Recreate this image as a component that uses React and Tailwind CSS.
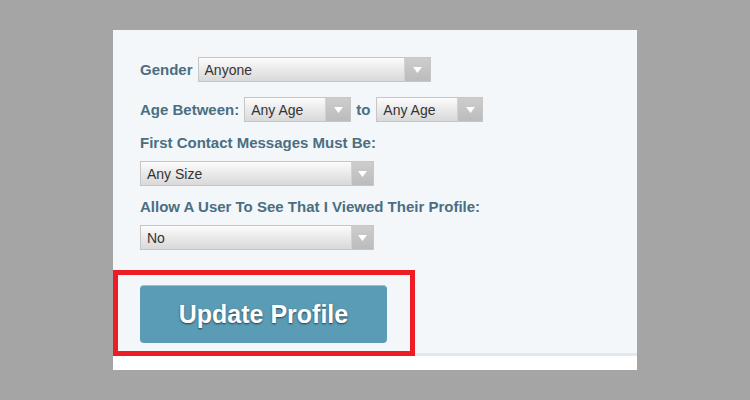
// Privacy settings form with the "Update Profile" call-out
const FONT = { fontFamily: '"Liberation Sans", Arial, Helvetica, sans-serif' }

function Caret() {
  return (
    <svg width="9" height="6" viewBox="0 0 9 6">
      <path d="M0 0h9L4.5 6z" fill="#ffffff" />
    </svg>
  )
}

function FakeSelect({ value, width, arrow = 22 }) {
  return (
    <div
      className="flex h-[25px] shrink-0 border border-[#c6c6c6] bg-linear-to-b from-[#fbfbfb] to-[#d9d9d9]"
      style={{ width }}
    >
      <div className="flex-1 flex items-center pl-[6px] text-[14px] text-[#333333] leading-none">{value}</div>
      <div
        className="h-full flex items-center justify-center border-l border-[#d2d2d2] bg-linear-to-b from-[#cdcdcd] to-[#bcbcbc]"
        style={{ width: arrow }}
      >
        <Caret />
      </div>
    </div>
  )
}

const LABEL = 'text-[15px] font-bold text-[#4b6e82] leading-[18px] whitespace-nowrap'

export default function App() {
  return (
    <div className="w-[750px] h-[400px] bg-[#a5a5a5] pt-[30px]" style={FONT}>
      <div className="relative mx-auto w-[524px] h-[340px] bg-white">
        <div className="h-[326px] bg-[#f3f7fa] border-b-[3px] border-[#e3e8ec] pl-[27px] pt-[27px]">
          <div className="flex items-center">
            <span className={LABEL}>Gender</span>
            <div className="ml-[5px]"><FakeSelect value="Anyone" width={233} arrow={26} /></div>
          </div>

          <div className="flex items-center mt-[15px]">
            <span className={LABEL}>Age Between:</span>
            <div className="ml-[5px]"><FakeSelect value="Any Age" width={107} arrow={25} /></div>
            <span className={`${LABEL} ml-[5px]`}>to</span>
            <div className="ml-[6px]"><FakeSelect value="Any Age" width={107} arrow={25} /></div>
          </div>

          <p className={`${LABEL} mt-[12px]`}>First Contact Messages Must Be:</p>
          <div className="mt-[9px]"><FakeSelect value="Any Size" width={234} /></div>

          <p className={`${LABEL} mt-[12px]`}>Allow A User To See That I Viewed Their Profile:</p>
          <div className="mt-[9px]"><FakeSelect value="No" width={234} /></div>

          <button
            type="button"
            className="mt-[35px] w-[247px] h-[58px] rounded-[4px] bg-[#5a9cb5] border-t border-[#8cc4d8] text-white text-[25px] font-bold [text-shadow:0_1px_2px_rgba(0,0,0,0.6)]"
          >
            Update Profile
          </button>
        </div>

        {/* red call-out frame */}
        <div className="absolute left-0 top-[240px] w-[302px] h-[86px] border-[5px] border-[#ee1c24] pointer-events-none" />
      </div>
    </div>
  )
}
